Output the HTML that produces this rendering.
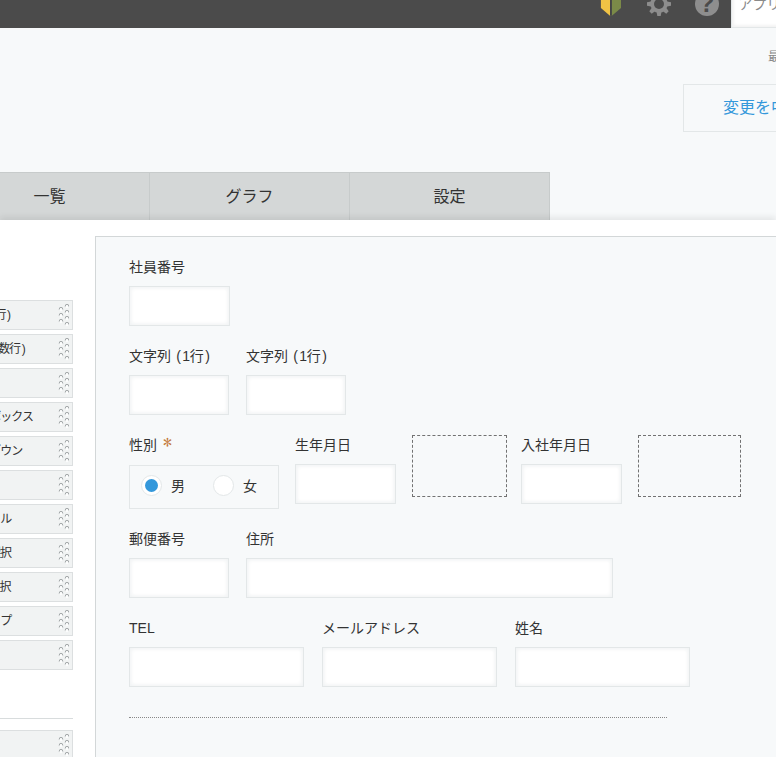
<!DOCTYPE html>
<html lang="ja">
<head>
<meta charset="utf-8">
<title>フォーム</title>
<style>
*{box-sizing:border-box;margin:0;padding:0}
html,body{width:776px;height:757px;overflow:hidden}
body{background:#f7f9fa;font-family:"Liberation Sans","Noto Sans CJK JP",sans-serif;color:#333;position:relative;font-size:14px}
.abs{position:absolute}
#hdr{left:0;top:0;width:776px;height:28px;background:#4b4b4b}
#search{left:731px;top:-10px;width:60px;height:38px;background:#fff;border:1px solid #e3e7e8;box-shadow:inset 2px -2px 3px rgba(0,0,0,.05);font-size:14px;line-height:20px;color:#8a8a8a;padding:2.5px 0 0 6.6px;white-space:nowrap;overflow:hidden}
#upd{left:768px;top:47px;font-size:12px;color:#888;white-space:nowrap}
#btn{left:683px;top:84px;width:120px;height:48px;border:1px solid #e3e7e8;background:#f7f9fa;color:#3498db;font-size:16px;line-height:46px;padding-left:39px;white-space:nowrap;overflow:hidden}
.tab{top:172px;height:48px;background:#d4d7d7;border-right:1px solid #c7cbcb;border-top:1px solid #c7cbcb;font-size:16px;line-height:48px;text-align:center;color:#333}
#white{left:0;top:220px;width:776px;height:537px;background:#fff;box-shadow:0 -3px 6px rgba(0,0,0,.08)}
#panel{left:95px;top:236px;width:700px;height:540px;background:#f7f9fa;border:1px solid #d3d7d8}
.pal{left:-77px;width:150px;height:30px;background:#f1f3f3;border:1px solid #dcdfe0;font-size:12px;line-height:28px;color:#333;white-space:nowrap}
.pal span{position:absolute;left:21.3px;top:0;letter-spacing:-1px}
.pal b,.lbl b{font-weight:normal;display:inline-block;width:.53em;text-align:center}
.pal u,.lbl u{text-decoration:none;letter-spacing:-.3px}
.grip{position:absolute;left:133px;top:0}
.lbl{font-size:14px;line-height:16px;color:#333;white-space:nowrap}
.inp{height:40px;background:#fff;border:1px solid #e3e7e8;box-shadow:inset 1px 1px 4px #f1f3f4, inset -1px -1px 4px #f1f3f4}
.sp{border:1px dashed #727272}
</style>
</head>
<body>
<svg width="0" height="0" style="position:absolute"><defs><g id="gd"><circle cx="2" cy="-2.6" r="1.8" fill="#fcfdfd"/><path d="M0.25,-1.9 L0.25,-2.9 A1.75,1.75 0 0 1 3.75,-2.9 L3.75,-1.9" fill="none" stroke="#b9bdbe" stroke-width="0.7"/><path d="M0.3,-2.9 A1.7,1.7 0 0 1 3.7,-2.9" fill="none" stroke="#a0a5a6" stroke-width="0.9"/></g></defs></svg>
<div id="hdr" class="abs"></div>
<svg class="abs" style="left:600px;top:0" width="24" height="18" viewBox="0 0 24 18"><polygon points="0.9,0 10.2,0 10.2,16 0.9,8" fill="#f0c345"/><polygon points="11.6,0 21,0 21,8 11.6,16" fill="#7b8a48"/><rect x="10.2" y="0" width="1.4" height="15.5" fill="#3d3d45"/></svg>
<svg class="abs" style="left:645px;top:-10px" width="28" height="28" viewBox="-14 -14 28 28"><g fill="#8d8d8d"><circle r="8.7"/><polygon id="t" points="-2.4,-8 -1.7,-12 1.7,-12 2.4,-8 2.4,8 1.7,12 -1.7,12 -2.4,8"/><use href="#t" transform="rotate(45)"/><use href="#t" transform="rotate(90)"/><use href="#t" transform="rotate(135)"/></g><circle r="5" fill="#4b4b4b"/></svg>
<svg class="abs" style="left:694.2px;top:-9.1px" width="26" height="26" viewBox="-13 -13 26 26"><circle r="12" fill="#8e8e8e"/><text x="0" y="8" text-anchor="middle" font-family="Liberation Sans, sans-serif" font-weight="bold" font-size="25" fill="#4b4b4b">?</text></svg>
<div id="search" class="abs">アプリ内検索</div>
<div id="upd" class="abs">最終更新</div>
<div id="btn" class="abs">変更を中止</div>

<div class="abs tab" style="left:-50px;width:200px">一覧</div>
<div class="abs tab" style="left:150px;width:200px">グラフ</div>
<div class="abs tab" style="left:350px;width:200px">設定</div>

<div id="white" class="abs"></div>
<div id="panel" class="abs"></div>

<div class="abs pal" style="top:300px"><span style="left:22.3px">文字列 <b>(</b><u>1</u>行<b>)</b></span><svg class="grip" width="12" height="28" viewBox="0 0 12 28"><use href="#gd" x="2" y="11"/><use href="#gd" x="2" y="17"/><use href="#gd" x="2" y="23"/><use href="#gd" x="8" y="8"/><use href="#gd" x="8" y="14"/><use href="#gd" x="8" y="20"/><use href="#gd" x="8" y="26"/></svg></div>
<div class="abs pal" style="top:334px"><span>文字列 <b>(</b>複数行<b>)</b></span><svg class="grip" width="12" height="28" viewBox="0 0 12 28"><use href="#gd" x="2" y="11"/><use href="#gd" x="2" y="17"/><use href="#gd" x="2" y="23"/><use href="#gd" x="8" y="8"/><use href="#gd" x="8" y="14"/><use href="#gd" x="8" y="20"/><use href="#gd" x="8" y="26"/></svg></div>
<div class="abs pal" style="top:368px"><span>計算</span><svg class="grip" width="12" height="28" viewBox="0 0 12 28"><use href="#gd" x="2" y="11"/><use href="#gd" x="2" y="17"/><use href="#gd" x="2" y="23"/><use href="#gd" x="8" y="8"/><use href="#gd" x="8" y="14"/><use href="#gd" x="8" y="20"/><use href="#gd" x="8" y="26"/></svg></div>
<div class="abs pal" style="top:402px"><span>チェックボックス</span><svg class="grip" width="12" height="28" viewBox="0 0 12 28"><use href="#gd" x="2" y="11"/><use href="#gd" x="2" y="17"/><use href="#gd" x="2" y="23"/><use href="#gd" x="8" y="8"/><use href="#gd" x="8" y="14"/><use href="#gd" x="8" y="20"/><use href="#gd" x="8" y="26"/></svg></div>
<div class="abs pal" style="top:436px"><span>ドロップダウン</span><svg class="grip" width="12" height="28" viewBox="0 0 12 28"><use href="#gd" x="2" y="11"/><use href="#gd" x="2" y="17"/><use href="#gd" x="2" y="23"/><use href="#gd" x="8" y="8"/><use href="#gd" x="8" y="14"/><use href="#gd" x="8" y="20"/><use href="#gd" x="8" y="26"/></svg></div>
<div class="abs pal" style="top:470px"><span>時刻</span><svg class="grip" width="12" height="28" viewBox="0 0 12 28"><use href="#gd" x="2" y="11"/><use href="#gd" x="2" y="17"/><use href="#gd" x="2" y="23"/><use href="#gd" x="8" y="8"/><use href="#gd" x="8" y="14"/><use href="#gd" x="8" y="20"/><use href="#gd" x="8" y="26"/></svg></div>
<div class="abs pal" style="top:504px"><span>添付ファイル</span><svg class="grip" width="12" height="28" viewBox="0 0 12 28"><use href="#gd" x="2" y="11"/><use href="#gd" x="2" y="17"/><use href="#gd" x="2" y="23"/><use href="#gd" x="8" y="8"/><use href="#gd" x="8" y="14"/><use href="#gd" x="8" y="20"/><use href="#gd" x="8" y="26"/></svg></div>
<div class="abs pal" style="top:538px"><span>ユーザー選択</span><svg class="grip" width="12" height="28" viewBox="0 0 12 28"><use href="#gd" x="2" y="11"/><use href="#gd" x="2" y="17"/><use href="#gd" x="2" y="23"/><use href="#gd" x="8" y="8"/><use href="#gd" x="8" y="14"/><use href="#gd" x="8" y="20"/><use href="#gd" x="8" y="26"/></svg></div>
<div class="abs pal" style="top:572px"><span>グループ選択</span><svg class="grip" width="12" height="28" viewBox="0 0 12 28"><use href="#gd" x="2" y="11"/><use href="#gd" x="2" y="17"/><use href="#gd" x="2" y="23"/><use href="#gd" x="8" y="8"/><use href="#gd" x="8" y="14"/><use href="#gd" x="8" y="20"/><use href="#gd" x="8" y="26"/></svg></div>
<div class="abs pal" style="top:606px"><span>ルックアップ</span><svg class="grip" width="12" height="28" viewBox="0 0 12 28"><use href="#gd" x="2" y="11"/><use href="#gd" x="2" y="17"/><use href="#gd" x="2" y="23"/><use href="#gd" x="8" y="8"/><use href="#gd" x="8" y="14"/><use href="#gd" x="8" y="20"/><use href="#gd" x="8" y="26"/></svg></div>
<div class="abs pal" style="top:640px"><span>罫線</span><svg class="grip" width="12" height="28" viewBox="0 0 12 28"><use href="#gd" x="2" y="11"/><use href="#gd" x="2" y="17"/><use href="#gd" x="2" y="23"/><use href="#gd" x="8" y="8"/><use href="#gd" x="8" y="14"/><use href="#gd" x="8" y="20"/><use href="#gd" x="8" y="26"/></svg></div>
<div class="abs" style="left:0;top:718px;width:73px;height:1px;background:#d8dcdd"></div>
<div class="abs pal" style="top:730px"><span>作成者</span><svg class="grip" width="12" height="28" viewBox="0 0 12 28"><use href="#gd" x="2" y="11"/><use href="#gd" x="2" y="17"/><use href="#gd" x="2" y="23"/><use href="#gd" x="8" y="8"/><use href="#gd" x="8" y="14"/><use href="#gd" x="8" y="20"/><use href="#gd" x="8" y="26"/></svg></div>

<div class="abs lbl" style="left:129px;top:259px">社員番号</div>
<div class="abs inp" style="left:129px;top:286px;width:101px"></div>

<div class="abs lbl" style="left:129px;top:348px">文字列 <b>(</b><u>1</u>行<b>)</b></div>
<div class="abs inp" style="left:129px;top:375px;width:100px"></div>
<div class="abs lbl" style="left:246px;top:348px">文字列 <b>(</b><u>1</u>行<b>)</b></div>
<div class="abs inp" style="left:246px;top:375px;width:100px"></div>

<div class="abs lbl" style="left:129px;top:437px">性別 <span style="color:#c47a3a;font-family:IPAGothic,'DejaVu Sans',sans-serif;font-size:18px;line-height:0;position:absolute;left:34px;top:4.5px">*</span></div>
<div class="abs" style="left:129px;top:465px;width:150px;height:44px;border:1px solid #e3e7e8;background:#f7f9fa"></div>
<div class="abs" style="left:141px;top:475px;width:21px;height:21px;border-radius:50%;background:#fff;border:1px solid #e3e7e8"></div>
<div class="abs" style="left:145px;top:479px;width:13px;height:13px;border-radius:50%;background:#3498db"></div>
<div class="abs lbl" style="left:171px;top:478px">男</div>
<div class="abs" style="left:213px;top:475px;width:21px;height:21px;border-radius:50%;background:#fff;border:1px solid #e3e7e8"></div>
<div class="abs lbl" style="left:243px;top:478px">女</div>

<div class="abs lbl" style="left:295px;top:437px">生年月日</div>
<div class="abs inp" style="left:295px;top:464px;width:101px"></div>
<div class="abs sp" style="left:412px;top:435px;width:95px;height:62px"></div>
<div class="abs lbl" style="left:521px;top:437px">入社年月日</div>
<div class="abs inp" style="left:521px;top:464px;width:101px"></div>
<div class="abs sp" style="left:638px;top:435px;width:103px;height:62px"></div>

<div class="abs lbl" style="left:129px;top:531px">郵便番号</div>
<div class="abs inp" style="left:129px;top:558px;width:100px"></div>
<div class="abs lbl" style="left:246px;top:531px">住所</div>
<div class="abs inp" style="left:246px;top:558px;width:367px"></div>

<div class="abs lbl" style="left:129px;top:620px">TEL</div>
<div class="abs inp" style="left:129px;top:647px;width:175px"></div>
<div class="abs lbl" style="left:322px;top:620px">メールアドレス</div>
<div class="abs inp" style="left:322px;top:647px;width:175px"></div>
<div class="abs lbl" style="left:515px;top:620px">姓名</div>
<div class="abs inp" style="left:515px;top:647px;width:175px"></div>

<div class="abs" style="left:129px;top:717px;width:538px;height:0;border-top:1px dotted #888"></div>
</body>
</html>
